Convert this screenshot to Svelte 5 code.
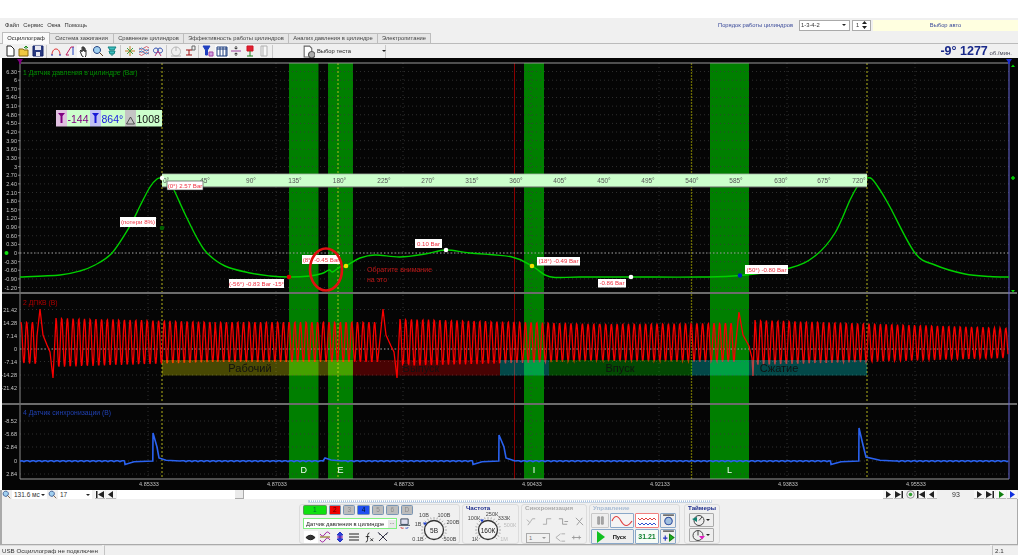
<script>
  // toolbar icons, 12x12 box: [d, stroke, fill]
  const ic = {
    doc: [['M3 1h4l3 3v7H3z', '#222', '#fff']],
    open: [['M1 4h4l1 1h4v6H1z', '#8a6a10', '#f0c840'], ['M6 3l2-2 2 2M8 1v3', '#1a8a1a', 'none']],
    save: [['M1 1h10v10H1z', '#12226a', '#2a3a80'], ['M3 1h6v4H3zM4 7h4v4H4z', 'none', '#e8e8f0']],
    arc: [['M2 10C2 2 10 2 10 10', '#e02020', 'none'], ['M1 10h2M9 10h2', '#2040c0', 'none']],
    marks: [['M2 10L7 2M7 2h3M2 10h3', '#c02060', 'none'], ['M9 2v8', '#2040c0', 'none']],
    hand: [['M4 11L2 6l1-1 1 2V2h1v4-4h1v4-3h1v4-2h1v5l-1 3z', '#333', '#fff']],
    zoom: [['M5 1.5a3.5 3.5 0 1 0 .01 0z', '#204080', '#a0d0f0'], ['M7.5 7.5L11 11', '#604020', 'none']],
    teal: [['M2 2h8L8 5H4zM3 6h6L8 9H4z', '#108080', '#40c0c0'], ['M6 9v2', '#108080', 'none']],
    cross: [['M6 1v10M1 6h10', '#c08020', 'none'], ['M3 3l6 6M9 3L3 9', '#40a040', 'none']],
    lattice: [['M1 3q2.500 3 5 0t5 0M1 6q2.500 3 5 0t5 0M1 9q2.500 3 5 0t5 0', '#d06070', 'none'], ['M1 4.500q2.500-3 5 0t5 0M1 7.500q2.500-3 5 0t5 0', '#4080c0', 'none']],
    rings: [['M4 3a2.500 2.500 0 1 0 .01 0zM8 3a2.500 2.500 0 1 0 .01 0z', '#3050b0', 'none'], ['M3 11l3-5 3 5', '#c04080', 'none']],
    gauge: [['M6 2a4.500 4.500 0 1 0 .01 0zM6 2v4M1 11h10', '#b4b4b4', 'none']],
    tzero: [['M2 5h6M5 5v5M2 10h6', '#a01010', 'none'], ['M8 1h3v4H8z', '#666', 'none']],
    funnel: [['M1 1h7L5.500 5v5h-2V5z', '#2040c0', '#2040c0'], ['M7 7h4v4H7z', '#a040a0', '#d0a0e0']],
    grid: [['M1 2h10v9H1zM4 2v9M7 2v9M10 2v9M1 4h10', '#204080', '#fff']],
    split: [['M1 6h10', '#a040a0', 'none'], ['M6 1v3M4.500 3L6 4l1.500-1M6 11V8M4.500 9L6 8l1.500 1', '#333', 'none']],
    flag: [['M3 1h6v5H3z', '#d01020', '#e02030'], ['M6 6v5M3 11h6', '#208020', 'none']],
    page: [['M3 1h6v10H3zM5 1v10', '#b0b0b0', '#f8f8f8']],
    test: [['M2 1h5l2 2v8H2z', '#666', '#fff'], ['M9 6a3 3 0 1 0 .01 0z', '#555', '#aaa']],
    eye: [['M1 6q5-5 10 0q-5 5-10 0z', '#111', '#333']],
    wavy: [['M1 3q2.500 4 5 0t5 0M1 9q2.500 4 5 0t5 0', '#a020a0', 'none'], ['M1 6h10', '#806000', 'none']],
    updown: [['M6 1l3 3H7v4h2l-3 3-3-3h2V4H3z', '#2030c0', '#3040e0'], ['M3 6h6', '#a020a0', 'none']],
    lines: [['M1 3h10M1 6h10M1 9h10', '#222', 'none']],
    fx: [['M3 11q2 0 2-3V4q0-3 2-3M3 5h4', '#222', 'none'], ['M8 7l3 3M11 7l-3 3', '#222', 'none']],
    tools: [['M2 2l8 8M10 2L2 10', '#334', 'none'], ['M1 1l2 3M11 1L9 4', '#667', 'none']],
    laptop: [['M2 1h8v6H2z', '#345', '#dde'], ['M0 8h12', '#345', 'none'], ['M2 10a2 1 0 0 0 3 1', '#d02020', 'none'], ['M10 10a2 1 0 0 1-3 1', '#2040c0', 'none']],
    sync1: [['M2 10L5 6l2-3h3M1 4l3 3', '#aaa', 'none']],
    sync2: [['M1 9h4V3h5', '#aaa', 'none']],
    sync3: [['M1 3h4v6h5M7 6h4', '#999', 'none']],
    sync4: [['M2 2l8 8M9 2L3 10', '#999', 'none']],
    sync5: [['M1 6l5-4M1 6l5 4M7 2h4M7 10h4', '#aaa', 'none']],
    sync6: [['M1 6h10M3 4v4M9 4v4', '#999', 'none']],
    pause: [['M3 2h2v8H3zM7 2h2v8H7z', '#999', '#aaa']],
    autoA: [['M6 3a3.500 3.500 0 1 0 .01 0z', '#3050a0', '#a0c0e0'], ['M1 1h10', '#222', 'none']],
    autoB: [['M1 1h10', '#222', 'none'], ['M7 4l4 3-4 3z', '#108010', '#20b020'], ['M3 5v5M1 7.500h4', '#2030c0', 'none']]
  }

  const tabs = [
    ['Осциллограф', 48], ['Система зажигания', 64], ['Сравнение цилиндров', 70],
    ['Эффективность работы цилиндров', 105], ['Анализ давления в цилиндре', 89], ['Электропитание', 53]
  ]
  const toolGroups = [
    ['doc', 'open', 'save'],
    ['arc', 'marks', 'hand', 'zoom', 'teal'],
    ['cross', 'lattice', 'rings'],
    ['gauge', 'tzero'],
    ['funnel', 'grid', 'split', 'flag', 'page']
  ]

  const gridX = [148, 276, 403, 531, 659, 787, 915]
  const times = ['4.85333', '4.87033', '4.88733', '4.90433', '4.92133', '4.93833', '4.95533']
  const yellowX = [162, 338, 867]
  const greenBands = [
    { x: 289, w: 29.5, name: 'D' }, { x: 328, w: 25, name: 'E' },
    { x: 524, w: 20, name: 'I' }, { x: 710, w: 39, name: 'L' }
  ]
  const phases = [
    { x: 162, w: 191, fill: '#ffff00', name: 'Рабочий', tx: 250 },
    { x: 353, w: 147, fill: '#ff0000', name: 'Выпуск', tx: 421 },
    { x: 500, w: 49, fill: '#00ffff' },
    { x: 549, w: 143, fill: '#00ff00', name: 'Впуск', tx: 620 },
    { x: 692, w: 175, fill: '#00ffff', name: 'Сжатие', tx: 779 }
  ]

  // Y ticks of channel 1: 6.30 down to -1.20
  const pressureTicks = Array.from({ length: 26 }, (_, i) => {
    const v = (21 - i) * 0.3
    return { y: 253 - v * 28.8, label: (21 - i) % 10 === 0 ? String(Math.round(v)) : v.toFixed(2) }
  })
  const dpkvTicks = [[309.5, '21.42'], [323, '14.28'], [336, '7.14'], [349, '0'], [361.5, '-7.14'], [375, '-14.28'], [388, '-21.42']]
  const syncTicks = [[421, '-8.52'], [434, '-5.68'], [447, '-2.84'], [461, '0'], [474, '2.84']]
  const degrees = [[205, '45°'], [251, '90°'], [295, '135°'], [339.500, '180°'], [384, '225°'], [428, '270°'], [472, '315°'], [516, '360°'], [560, '405°'], [604, '450°'], [648, '495°'], [692, '540°'], [736, '585°'], [781, '630°'], [824, '675°'], [859, '720°']]

  const pressure = [
    [20, 277], [60, 275], [80, 271], [95, 265], [112, 253], [130, 226], [140, 206], [150, 187], [157, 179], [162, 178],
    [167, 180], [173, 188], [185, 214], [197, 238], [207, 253], [225, 266], [250, 273], [270, 276], [289, 277], [310, 276],
    [322, 273.5], [329, 270], [332, 272], [335, 270.500], [340, 267], [346, 266], [360, 258], [375, 255], [400, 257],
    [425, 254], [446, 250], [470, 253], [512, 257], [532, 266], [545, 275], [555, 277.500], [580, 277], [631, 277],
    [700, 277], [740, 275.500], [790, 268], [815, 256], [835, 233], [850, 200], [857, 187], [863, 179], [867, 178], [872, 179],
    [880, 190], [890, 207], [915, 253], [935, 265], [965, 274], [990, 276.500], [1009, 277]
  ]

  // catmull-rom through the points
  function smooth(p) {
    let d = `M${p[0][0]} ${p[0][1]}`
    for (let i = 0; i < p.length - 1; i++) {
      const a = p[Math.max(i - 1, 0)], b = p[i], c = p[i + 1], e = p[Math.min(i + 2, p.length - 1)]
      d += `C${(b[0] + (c[0] - a[0]) / 6).toFixed(1)} ${(b[1] + (c[1] - a[1]) / 6).toFixed(1)} ${(c[0] - (e[0] - b[0]) / 6).toFixed(1)} ${(c[1] - (e[1] - b[1]) / 6).toFixed(1)} ${c[0]} ${c[1]}`
    }
    return d
  }

  // sine between x0 and x1, top and bottom envelopes go linearly
  function sine(x0, x1, top0, bot0, top1, bot1, period = 5.7) {
    const out = []
    for (let x = x0; x <= x1; x += 0.5) {
      const t = (x - x0) / (x1 - x0)
      const top = top0 + (top1 - top0) * t, bot = bot0 + (bot1 - bot0) * t
      out.push([x, (top + bot) / 2 - ((bot - top) / 2) * Math.cos(((x - x0) / period) * Math.PI * 2)])
    }
    return out
  }

  const dpkv = [
    ...sine(21, 37, 322, 363, 322, 364),
    [40, 309], [43, 335], [47, 345], [50, 352], [53, 378],
    ...sine(56, 215, 318, 367, 322, 362),
    ...sine(215, 378, 322, 362, 322, 362),
    [383, 309], [386, 335], [391, 346], [394, 352], [397, 378],
    ...sine(400, 600, 319, 366, 324, 361),
    ...sine(600, 735, 324, 361, 323, 362),
    [739, 312], [743, 335], [749, 346], [752, 358], [753, 376],
    ...sine(755, 1008, 320, 365, 328, 358)
  ].map((p) => p.join(',')).join(' ')

  const syncAnchors = [
    [20, 461], [124.500, 461], [125, 464.500], [134, 461.800], [152.800, 461], [153, 433], [157, 447], [159, 458], [166, 460.300], [180, 461],
    [323, 461], [325, 458], [331, 460], [342, 461],
    [472.500, 461], [473, 464.500], [482, 461.800], [498.800, 461], [499, 435], [504, 447], [506, 458], [515, 461],
    [830.500, 461], [831, 464.500], [841, 461.800], [858.800, 461], [859, 428], [863, 445], [866, 457], [880, 460.300], [895, 461], [1008, 461]
  ]
  // the flat parts of the trace are slightly noisy
  const syncTrace = syncAnchors.flatMap((a, i) => {
    const b = syncAnchors[i + 1]
    if (!b || b[0] - a[0] < 20 || a[1] !== b[1]) return [a]
    const pts = [a]
    for (let x = a[0] + 2; x < b[0]; x += 2) pts.push([x, a[1] + (Math.round(x / 2) % 3 === 0 ? 0.6 : -0.2)])
    return pts
  }).map((p) => p.join(',')).join(' ')

  const callouts = [
    { x: 120, y: 217, w: 36, h: 10, t: '(потери 8%)' },
    { x: 229, y: 279, w: 55, h: 9, t: '(-56°) -0.83 Bar -15°' },
    { x: 302, y: 255, w: 38, h: 9, t: '(8°) -0.45 Bar' },
    { x: 415, y: 239, w: 27, h: 9, t: '0.10 Bar' },
    { x: 537, y: 257, w: 43, h: 8.500, t: '(18°) -0.49 Bar' },
    { x: 598, y: 279, w: 28, h: 8.500, t: '-0.86 Bar' },
    { x: 745, y: 265, w: 43, h: 9, t: '(50°) -0.80 Bar' }
  ]
  const dots = [
    [289, 277, '#e00000'], [346, 266, '#f0e000'], [446, 250, '#fff'], [532, 266, '#f0e000'], [631, 277, '#fff'], [740, 275.500, '#0020c0'], [162, 228, '#006000']
  ]

  const channels = [
    { n: '1', c: 'ch on-g' }, { n: '2', c: 'ch on-r' }, { n: '3', c: 'ch' }, { n: '4', c: 'ch on-b' },
    { n: '5', c: 'ch' }, { n: '6', c: 'ch' }, { n: 'D', c: 'ch' }
  ]

  const ticks = Array.from({ length: 19 }, (_, i) => (-225 + i * 15) * (Math.PI / 180))
  const voltLabels = [[11, 12, '10В'], [31, 12, '100В'], [40, 19, '200В'], [37, 36, '500В'], [5, 36, '0.1В'], [5, 21, '1В']]
  const freqLabels = [[11, 15, '100К'], [29, 11, '250К'], [41, 15, '333К'], [47, 22, '500К', 1], [12, 36, '1К'], [41, 36, '1М', 1]]
</script>

{#snippet icon(name, size = 12)}
  <svg class="ico" width={size} height={size} viewBox="0 0 12 12">
    {#each ic[name] as p}
      <path d={p[0]} stroke={p[1]} fill={p[2]} stroke-width="1" />
    {/each}
  </svg>
{/snippet}

{#snippet knob(w, cx, cy, value, labels, px, py)}
  <svg class="knob" width={w} height="40" viewBox="0 0 {w} 40">
    {#each ticks as a}
      <line x1={cx + Math.cos(a) * 11} y1={cy + Math.sin(a) * 11} x2={cx + Math.cos(a) * 13} y2={cy + Math.sin(a) * 13} stroke="#9a9a9a" stroke-width="0.8" />
    {/each}
    <circle {cx} {cy} r="9.500" fill="#f4f4f4" stroke="#333" stroke-width="1.300" />
    <polygon points="{px - 2},{py - 1.500} {px + 2},{py - 1.500} {px},{py + 1.500}" fill="#2040d0" />
    <text x={cx} y={cy + 2.500} text-anchor="middle" class="knob-val">{value}</text>
    {#each labels as l}
      <text x={l[0]} y={l[1]} text-anchor="middle" class="knob-lbl" class:faded={l[3]}>{l[2]}</text>
    {/each}
  </svg>
{/snippet}

{#snippet navbtn(d, fill = '#222')}
  <span class="nav">
    <svg width="8" height="7" viewBox="0 0 8 7"><path {d} {fill} /></svg>
  </span>
{/snippet}

<div class="app">
  <div class="menu">
    <span>Файл</span><span>Сервис</span><span>Окна</span><span>Помощь</span>
    <span class="order">Порядок работы цилиндров</span>
    <span class="combo order-combo">1-3-4-2<i class="arrow"></i></span>
    <span class="combo spin">1<svg width="5" height="8" viewBox="0 0 5 8"><path d="M2.500 0L5 3H0zM0 5h5L2.500 8z" fill="#222" /></svg></span>
    <span class="auto">Выбор авто</span>
  </div>

  <div class="tabs">
    {#each tabs as t, i}
      <span class="tab" class:active={i === 0} style:width="{t[1]}px">{t[0]}</span>
    {/each}
  </div>

  <div class="toolbar">
    {#each toolGroups as group}
      <div class="tgroup">
        {#each group as name}
          <span class="tbtn" class:pressed={name === 'hand' || name === 'grid'}>{@render icon(name)}</span>
        {/each}
      </div>
    {/each}
    <div class="testsel">
      {@render icon('test', 13)}
      <span>Выбор теста</span>
      <i class="arrow"></i>
    </div>
    <div class="rpm"><b>-9° 1277</b> <small>об./мин.</small></div>
  </div>

  <div class="scope">
    <svg width="1016" height="432" viewBox="2 58 1016 432">
      <rect x="2" y="58" width="1016" height="432" fill="#050505" />

      {#each greenBands as b}
        <rect x={b.x} y="63" width={b.w} height="416" fill="#007f00" />
      {/each}

      <!-- grid -->
      {#each pressureTicks as t}
        <line x1="20" x2="1009" y1={t.y} y2={t.y} class="grid" />
        <text x="17" y={t.y + 2} class="tick">{t.label}</text>
        <line x1="18" x2="20" y1={t.y} y2={t.y} stroke="#ccc" stroke-width="0.6" />
      {/each}
      {#each dpkvTicks as t}
        <line x1="20" x2="1009" y1={t[0]} y2={t[0]} class="grid" />
        <text x="17" y={t[0] + 2} class="tick">{t[1]}</text>
      {/each}
      {#each syncTicks as t}
        <line x1="20" x2="1009" y1={t[0]} y2={t[0]} class="grid" />
        <text x="17" y={t[0] + 2} class="tick">{t[1]}</text>
      {/each}
      {#each gridX as x}
        <line x1={x} x2={x} y1="63" y2="479" class="grid" />
      {/each}
      {#each yellowX as x}
        <line x1={x} x2={x} y1="63" y2="479" class="yline" />
      {/each}
      <line x1="691.500" x2="691.500" y1="63" y2="479" stroke="#6a6a00" stroke-width="1.300" stroke-dasharray="2 1" />
      <line x1="514.500" x2="514.500" y1="63" y2="479" stroke="#8a0000" stroke-width="1" />
      <line x1="20" x2="1009" y1="253" y2="253" class="zero" />
      <line x1="20" x2="1009" y1="349" y2="349" class="zero" />

      <!-- panel frames -->
      <line x1="20" x2="20" y1="63" y2="479" stroke="#8c8c8c" stroke-width="1" />
      <line x1="20" x2="1009" y1="63" y2="63" stroke="#9a9a9a" stroke-width="1" />
      <line x1="2" x2="1017" y1="293" y2="293" stroke="#6c6c6c" stroke-width="2" />
      <line x1="2" x2="1017" y1="404" y2="404" stroke="#6c6c6c" stroke-width="2" />
      <line x1="20" x2="1009" y1="479" y2="479" stroke="#9a9a9a" stroke-width="1" />
      <line x1="1009" x2="1009" y1="63" y2="479" stroke="#6868d8" stroke-width="1" />

      <!-- channel 2 and its phase strip -->
      <polyline points={dpkv} fill="none" stroke="#f80000" stroke-width="1.300" />
      {#each phases as p}
        <rect x={p.x} y="360" width={p.w} height="15.500" fill={p.fill} fill-opacity="0.27" />
        {#if p.name}
          <text x={p.tx} y="372" text-anchor="middle" class="phase">{p.name}</text>
        {/if}
      {/each}

      <!-- channel 4 -->
      <polyline points={syncTrace} fill="none" stroke="#2a62f0" stroke-width="1.600" />

      <!-- channel 1 -->
      <path d={smooth(pressure)} fill="none" stroke="#00d000" stroke-width="1.400" />

      <rect x="162" y="174" width="705" height="13" fill="#ccffcc" />
      <line x1="162" x2="867" y1="187" y2="187" stroke="#666" stroke-width="1" />
      <line x1="162" x2="867" y1="174" y2="174" stroke="#a8b8a8" stroke-width="0.800" />
      <text x="166" y="183" text-anchor="middle" class="deg">0°</text>
      {#each degrees as d}
        <text x={d[0]} y="183" text-anchor="middle" class="deg">{d[1]}</text>
      {/each}

      <text x="23" y="75" class="ch1">1 Датчик давления в цилиндре (Bar)</text>
      <text x="23" y="305" class="ch2">2 ДПКВ (В)</text>
      <text x="23" y="415" class="ch4">4 Датчик синхронизации (В)</text>

      {#each greenBands as b}
        <text x={b.x + b.w / 2} y="473" text-anchor="middle" class="band-name">{b.name}</text>
      {/each}

      {#each dots as d}
        <circle cx={d[0]} cy={d[1]} r="2.300" fill={d[2]} />
      {/each}
      <circle cx="162" cy="178" r="2.200" fill="#fff" />

      {#each callouts as c}
        <rect x={c.x} y={c.y} width={c.w} height={c.h} fill="#fff" />
        <text x={c.x + c.w / 2} y={c.y + c.h / 2 + 2.200} text-anchor="middle" class="callout">{c.t}</text>
      {/each}
      <rect x="167" y="181" width="36" height="9" fill="#fff" stroke="#333" stroke-width="0.600" />
      <text x="185" y="187.700" text-anchor="middle" class="callout">(0°) 2.57 Bar</text>

      <ellipse cx="326" cy="269.500" rx="16" ry="21" fill="none" stroke="#e01010" stroke-width="2.600" />
      <text x="367" y="272" class="note">Обратите внимание</text>
      <text x="367" y="282" class="note">на это</text>

      <!-- legend over the first panel -->
      <rect x="56" y="110" width="11" height="16.500" fill="#e0c0e0" />
      <rect x="67" y="110" width="23" height="16.500" fill="#ccffcc" />
      <rect x="90" y="110" width="11" height="16.500" fill="#c0c0f4" />
      <rect x="101" y="110" width="24" height="16.500" fill="#ccffcc" />
      <rect x="125" y="110" width="11" height="16.500" fill="#c4c4c4" />
      <rect x="136" y="110" width="26" height="16.500" fill="#ccffcc" />
      <path d="M58 113h7l-2.500 3v7h-2v-7z" fill="#800080" />
      <path d="M92 113h7l-2.500 3v7h-2v-7z" fill="#1818d8" />
      <path d="M130.500 117l4 7h-8z" fill="none" stroke="#333" stroke-width="0.800" />
      <text x="67.500" y="122.500" class="legend" fill="#800080">-144</text>
      <text x="101.500" y="122.500" class="legend" fill="#1a1ae0">864°</text>
      <text x="136.500" y="122.500" class="legend" fill="#111">1008</text>

      <!-- markers around the frame -->
      <path d="M17 59h6l-2 3v2h-2v-2z" fill="#800080" />
      <path d="M1006 59h6l-2 3v2h-2v-2z" fill="#2030d0" />
      <path d="M1011 67l2-2.500 2 2.500z" fill="#00e000" />
      <path d="M1011 290l2 2.500 2-2.500z" fill="#00e000" />
      <path d="M1013 176v4M1011 178h4" stroke="#00d000" stroke-width="1.500" />
      <circle cx="6.500" cy="253" r="2" fill="#10e010" />

      {#each gridX as x, i}
        <text x={x + 1} y="486" text-anchor="middle" class="time">{times[i]}</text>
      {/each}
    </svg>
  </div>

  <div class="scrollrow">
    <span class="mini">{@render icon('zoom', 9)}</span>
    <span class="val w-time">131.6 мс<i class="arrow"></i></span>
    <span class="mini">{@render icon('zoom', 9)}</span>
    <span class="val w-num">17<i class="arrow"></i></span>
    {@render navbtn('M0 0h1.500v7H0zM8 0v7L2 3.500z')}
    {@render navbtn('M6 0v7L1 3.500z')}
    <div class="track"><span class="thumb"></span></div>
    {@render navbtn('M2 0v7l5-3.500z')}
    {@render navbtn('M0 0v7l6-3.500zM6.500 0H8v7H6.500z')}
    <span class="mini target"><svg width="9" height="9" viewBox="0 0 9 9"><circle cx="4.500" cy="4.500" r="3.800" fill="#eee" stroke="#999" /><circle cx="4.500" cy="4.500" r="1.800" fill="#30a030" /></svg></span>
    {@render navbtn('M0 0h1.500v7H0zM8 0v7L2 3.500z')}
    {@render navbtn('M6 0v7L1 3.500z')}
    <span class="pos">93</span>
    {@render navbtn('M2 0v7l5-3.500z')}
    {@render navbtn('M0 0v7l6-3.500zM6.500 0H8v7H6.500z')}
    {@render navbtn('M2 0v7l5-3.500z', '#108010')}
    {@render navbtn('M2 0v7l5-3.500z', '#1030e0')}
  </div>

  <div class="controls">
    <div class="dots"></div>
    <div class="panels">
      <div class="panel chan">
        <div class="chan-left">
          <div class="ch-row">
            {#each channels as c}
              <span class={c.c}>{c.n}</span>
            {/each}
          </div>
          <div class="sensor-row">
            <span class="sensor">Датчик давления в цилиндре<i class="more">...</i></span>
            {@render icon('laptop', 11)}
          </div>
          <div class="chan-icons">
            <span class="cbtn white">{@render icon('eye', 11)}</span>
            <span class="cbtn">{@render icon('wavy', 12)}</span>
            <span class="cbtn">{@render icon('updown', 12)}</span>
            <span class="cbtn">{@render icon('lines', 12)}</span>
            <span class="cbtn">{@render icon('fx', 11)}</span>
            <span class="cbtn">{@render icon('tools', 12)}</span>
          </div>
        </div>
        {@render knob(46, 21, 25, '5В', voltLabels, 12, 19)}
      </div>

      <div class="panel freq">
        <div class="title navy">Частота</div>
        {@render knob(55, 25, 25, '160К', freqLabels, 19, 16)}
      </div>

      <div class="panel sync">
        <div class="title gray">Синхронизация</div>
        <div class="sync-row">
          {@render icon('sync1', 11)}{@render icon('sync2', 11)}{@render icon('sync3', 11)}{@render icon('sync4', 11)}
        </div>
        <div class="sync-row">
          <span class="combo sync-combo">1<i class="arrow gray-arrow"></i></span>
          {@render icon('sync5', 11)}{@render icon('sync6', 11)}
        </div>
      </div>

      <div class="panel ctrl">
        <div class="title pale">Управление</div>
        <div class="ctrl-grid">
          <span class="cb pause">{@render icon('pause', 11)}</span>
          <span class="cb blue sine">
            <svg width="22" height="12" viewBox="0 0 22 12"><path d="M1 6Q5-3 10 6T21 6" fill="none" stroke="#e04040" stroke-width="1.200" /></svg>
          </span>
          <span class="cb pink">
            <svg width="20" height="12" viewBox="0 0 20 12"><path d="M1 3l2 2 2-2 2 2 2-2 2 2 2-2 2 2 2-2 2 2" fill="none" stroke="#e04040" /><path d="M1 8l2 2 2-2 2 2 2-2 2 2 2-2 2 2 2-2 2 2" fill="none" stroke="#3050d0" /></svg>
          </span>
          <span class="cb blue">{@render icon('autoA', 13)}</span>
          <span class="cb blue start">
            <svg width="8" height="12" viewBox="0 0 8 12"><path d="M0 0l8 6-8 6z" fill="#10c020" /></svg>
            <b>Пуск</b>
          </span>
          <span class="cb blue count">31.21</span>
          <span class="cb blue">{@render icon('autoB', 13)}</span>
        </div>
      </div>

      <div class="panel timers">
        <div class="title navy">Таймеры</div>
        <span class="timer">
          <svg width="13" height="13" viewBox="0 0 13 13"><circle cx="7" cy="6.500" r="5" fill="#eee" stroke="#444" /><path d="M7 6.500L10 3" stroke="#444" /><path d="M0 5l5-2v5z" fill="#108070" /></svg>
          <i class="arrow"></i>
        </span>
        <span class="timer">
          <svg width="13" height="13" viewBox="0 0 13 13"><circle cx="6" cy="6.500" r="5" fill="#eee" stroke="#444" /><path d="M6 6.500V2" stroke="#444" /><path d="M7 7h6l-3 3.500z" fill="#e020c0" /></svg>
          <i class="arrow"></i>
        </span>
      </div>
    </div>
  </div>

  <div class="status">
    <span class="st st-msg">USB Осциллограф не подключен</span>
    <span class="st st-fill"></span>
    <span class="st st-ver">2.1</span>
  </div>
</div>

<style>
  :global(body) {
    margin: 0;
    background: #fff;
  }

  .app {
    width: 1018px;
    padding-top: 18px;
    font-family: "Liberation Sans", Arial, sans-serif;
    font-size: 5.8px;
    color: #333;
    filter: blur(0.3px);
  }

  svg {
    display: block;
    flex: none;
  }

  .knob {
    overflow: visible;
  }

  text {
    font-family: "Liberation Sans", Arial, sans-serif;
  }

  .arrow {
    display: inline-block;
    width: 0;
    height: 0;
    border: 2px solid transparent;
    border-top: 2.5px solid #222;
    border-bottom: 0;
  }

  /* top */
  .menu {
    height: 14px;
    background: #f0f0f0;
    display: flex;
    align-items: center;
    gap: 4px;
    padding-left: 5px;
  }

  .order {
    margin-left: auto;
    color: #3a4a9a;
    margin-right: 2px;
  }

  .combo {
    display: flex;
    align-items: center;
    justify-content: space-between;
    background: #fff;
    border: 1px solid #aaa;
    box-sizing: border-box;
    padding: 0 3px 0 1px;
  }

  .order-combo {
    width: 51px;
    height: 11px;
  }

  .spin {
    width: 19px;
    height: 11px;
    margin-left: -2px;
    padding-left: 3px;
  }

  .auto {
    width: 145px;
    height: 11px;
    margin-left: -2px;
    background: #ffffe0;
    color: #3a4a9a;
    text-align: center;
    line-height: 11px;
  }

  .tabs {
    height: 12px;
    background: #f0f0f0;
    display: flex;
    align-items: flex-end;
    padding-left: 2px;
    border-bottom: 1px solid #bbb;
    box-sizing: border-box;
  }

  .tab {
    height: 10px;
    box-sizing: border-box;
    border: 1px solid #bdbdbd;
    border-bottom: 0;
    border-left-width: 0;
    background: #e6e6e6;
    text-align: center;
    line-height: 9px;
    color: #444;
    white-space: nowrap;
  }

  .tab.active {
    height: 12px;
    background: #fafafa;
    border-left-width: 1px;
    line-height: 10px;
    margin-bottom: -1px;
    color: #222;
  }

  .toolbar {
    height: 14px;
    background: #f0f0f0;
    display: flex;
    align-items: center;
    padding-left: 3px;
  }

  .tgroup {
    display: flex;
    height: 13px;
    padding-right: 1px;
    margin-right: 2px;
    border-right: 1px solid #c8c8c8;
  }

  .tbtn {
    width: 14px;
    height: 13px;
    display: flex;
    align-items: center;
    justify-content: center;
    box-sizing: border-box;
  }

  .tbtn.pressed {
    background: #fafafa;
  }

  .testsel {
    width: 111px;
    height: 13px;
    display: flex;
    align-items: center;
    gap: 2px;
    padding-left: 27px;
    box-sizing: border-box;
    border-right: 1px solid #c8c8c8;
    color: #222;
    white-space: nowrap;
  }

  .testsel .arrow {
    margin-left: 29px;
  }

  .rpm {
    margin-left: auto;
    margin-right: 6px;
    color: #1a2a8a;
    white-space: nowrap;
  }

  .rpm b {
    font-size: 12.5px;
  }

  .rpm small {
    font-size: 6px;
    color: #445;
  }

  /* scope */
  .scope {
    margin-left: 2px;
    height: 432px;
    overflow: hidden;
  }

  .grid {
    stroke: #3a3a3a;
    stroke-width: 0.8;
    stroke-dasharray: 1 3;
  }

  .yline {
    stroke: #c8c820;
    stroke-width: 0.9;
    stroke-dasharray: 2 2;
  }

  .zero {
    stroke: #bbb;
    stroke-width: 0.8;
    stroke-dasharray: 1.5 2;
  }

  .tick {
    font-size: 5.5px;
    fill: #c8c8c8;
    text-anchor: end;
  }

  .deg {
    font-size: 6.5px;
    fill: #555;
  }

  .ch1 {
    font-size: 6.8px;
    fill: #009000;
  }

  .ch2 {
    font-size: 6.8px;
    fill: #b00000;
  }

  .ch4 {
    font-size: 6.8px;
    fill: #2040b0;
  }

  .phase {
    font-size: 11px;
    fill: #111;
  }

  .band-name {
    font-size: 9px;
    fill: #f0fff0;
  }

  .callout {
    font-size: 6.1px;
    fill: #f03040;
  }

  .note {
    font-size: 7px;
    fill: #c01818;
  }

  .legend {
    font-size: 10.5px;
  }

  .time {
    font-size: 5.5px;
    fill: #c0c0c0;
  }

  /* slider row */
  .scrollrow {
    height: 9px;
    background: #f0f0f0;
    border-left: 2px solid #aaa;
    box-sizing: border-box;
    display: flex;
    align-items: center;
    font-size: 6.5px;
  }

  .mini {
    width: 9px;
    height: 9px;
    flex: none;
  }

  .val {
    display: flex;
    align-items: center;
    justify-content: space-between;
    background: #fff;
    height: 9px;
    padding: 0 2px;
    box-sizing: border-box;
    margin: 0 1px;
  }

  .w-time {
    width: 35px;
  }

  .w-num {
    width: 34px;
    margin-right: 3px;
  }

  .nav {
    width: 10px;
    height: 9px;
    margin-right: 1px;
    flex: none;
    display: flex;
    align-items: center;
    justify-content: center;
    background: #f8f8f8;
    border-bottom: 1px solid #bbb;
    box-sizing: border-box;
  }

  .track {
    flex: 1;
    height: 9px;
    background: #fff;
    padding-left: 118px;
  }

  .thumb {
    display: block;
    width: 9px;
    height: 9px;
    background: #eaeaea;
    border: 1px solid #aaa;
    border-top: 0;
    border-left: 0;
    box-sizing: border-box;
  }

  .target {
    margin: 0 1px;
  }

  .pos {
    width: 36px;
    flex: none;
    text-align: center;
    font-size: 7px;
  }

  /* bottom controls */
  .controls {
    height: 46px;
    background: #f0f0f0;
    border-left: 2px solid #aaa;
    border-right: 1px solid #aaa;
    border-bottom: 1px solid #aaa;
    box-sizing: border-box;
    display: flex;
    flex-direction: column;
    align-items: center;
  }

  .dots {
    width: 404px;
    height: 3px;
    margin-top: 1px;
    box-sizing: border-box;
    border: 1px solid #c8d4e0;
    border-top-style: dotted;
    background: repeating-linear-gradient(90deg, #a8c4e8 0 1px, #fff 1px 2px);
  }

  .panels {
    display: flex;
    gap: 2px;
    margin-top: 1px;
    height: 40px;
  }

  .panel {
    box-sizing: border-box;
    border: 1px solid #dcdcdc;
    border-radius: 3px;
    height: 40px;
  }

  .chan {
    width: 161px;
    display: flex;
    padding-left: 3px;
  }

  .chan-left {
    width: 110px;
  }

  .ch-row {
    display: flex;
    gap: 2px;
    height: 10px;
    margin-top: 0;
  }

  .ch {
    width: 12.500px;
    height: 10px;
    box-sizing: border-box;
    border: 1px solid #7a96b4;
    border-radius: 1.5px;
    background: #bcbcbc;
    color: #8c8c8c;
    text-align: center;
    line-height: 8px;
    font-size: 6.5px;
  }

  .on-g {
    width: 24px;
    background: #10e010;
    color: #063;
    border-color: #5a9a5a;
  }

  .on-r {
    background: #f00000;
    color: #500;
  }

  .on-b {
    background: #2050f0;
    color: #012;
  }

  .sensor-row {
    display: flex;
    align-items: center;
    gap: 2px;
    margin-top: 3px;
  }

  .sensor {
    width: 94px;
    height: 11px;
    box-sizing: border-box;
    border: 1px solid #80f080;
    background: #fff;
    color: #222;
    display: flex;
    justify-content: space-between;
    align-items: center;
    padding-left: 2px;
    white-space: nowrap;
  }

  .more {
    width: 8px;
    height: 8px;
    background: #e8e8e8;
    font-style: normal;
    text-align: center;
    line-height: 5px;
  }

  .chan-icons {
    display: flex;
    margin-top: 2px;
    margin-left: 1px;
    gap: 1px;
  }

  .cbtn {
    width: 13.500px;
    height: 12px;
    display: flex;
    align-items: center;
    justify-content: center;
  }

  .cbtn.white {
    background: #fff;
  }

  .knob-val {
    font-size: 6.5px;
    fill: #222;
  }

  .knob-lbl {
    font-size: 5.5px;
    fill: #444;
  }

  .knob-lbl.faded {
    fill: #bbb;
  }

  .title {
    font-size: 6.2px;
    height: 6px;
    line-height: 6px;
    padding-left: 3px;
    font-weight: bold;
    white-space: nowrap;
  }

  .navy {
    color: #1a2a8a;
  }

  .gray {
    color: #aaa;
  }

  .pale {
    color: #a8bcd4;
  }

  .freq {
    width: 57px;
  }

  .freq .knob {
    margin-top: -6px;
  }

  .sync {
    width: 66px;
  }

  .sync-row {
    display: flex;
    align-items: center;
    gap: 5px;
    margin-top: 5px;
    padding-left: 4px;
  }

  .sync-combo {
    width: 24px;
    height: 10px;
    background: #f0f0f0;
    color: #777;
    padding-left: 2px;
  }

  .gray-arrow {
    border-top-color: #999;
  }

  .ctrl {
    width: 91px;
  }

  .ctrl-grid {
    display: grid;
    grid-template-columns: 18px 24px 24px 16px;
    grid-template-rows: 15px 15px;
    gap: 1px;
    margin: 2px 0 0 1px;
  }

  .cb {
    box-sizing: border-box;
    background: #eee;
    border: 1px solid #c8c8c8;
    display: flex;
    align-items: center;
    justify-content: center;
    border-radius: 1px;
  }

  .cb.blue {
    border-color: #8aa8c8;
  }

  .cb.pink {
    border-color: #f08080;
    background: #fff;
  }

  .cb.sine {
    background: #f4f4f4;
  }

  .start {
    grid-column: span 2;
    justify-content: space-between;
    padding: 0 7px 0 5px;
    color: #111;
  }

  .count {
    background: #f6fbf6;
    color: #108030;
    font-weight: bold;
    font-size: 7px;
  }

  .timers {
    width: 36px;
    margin-left: 2px;
  }

  .timer {
    display: flex;
    align-items: center;
    justify-content: space-between;
    box-sizing: border-box;
    width: 25px;
    height: 14px;
    margin: 2px 0 0 4px;
    padding: 0 3px 0 2px;
    background: #eee;
    border: 1px solid #aaa;
    border-radius: 1px;
  }

  .timer + .timer {
    margin-top: 1px;
  }

  /* status bar */
  .status {
    height: 10px;
    display: flex;
    gap: 2px;
    background: #f0f0f0;
    font-size: 6.2px;
  }

  .st {
    box-sizing: border-box;
    border-left: 1px solid #c4c4c4;
    border-top: 1px solid #dcdcdc;
    line-height: 9px;
    padding-left: 2px;
    white-space: nowrap;
  }

  .st-msg {
    width: 102px;
    border-left: 0;
  }

  .st-fill {
    flex: 1;
  }

  .st-ver {
    width: 26px;
  }
</style>
